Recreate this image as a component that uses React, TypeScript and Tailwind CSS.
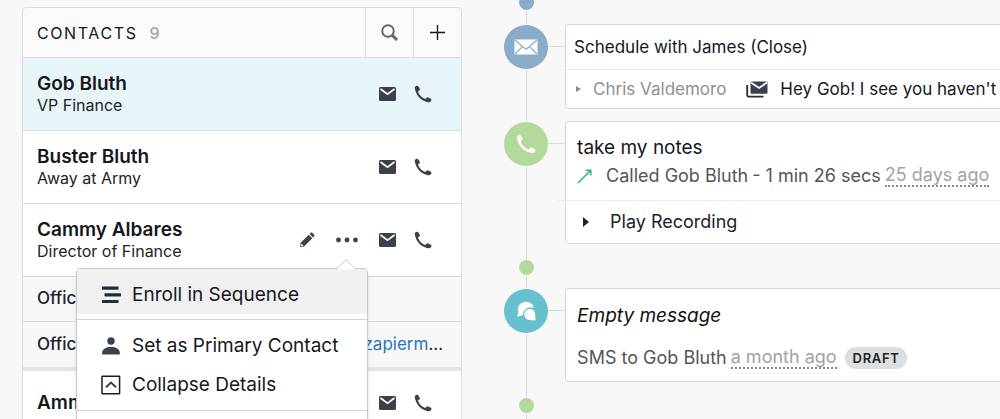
import type { ReactNode } from 'react';

const MailIcon = () => (
  <svg width="17" height="14" viewBox="0 0 17 14" fill="none">
    <rect width="17" height="14" rx="1.5" fill="#3b404c" />
    <path d="M1.5 2L8.5 7.2L15.5 2" stroke="#fff" strokeWidth="1.7" />
  </svg>
);

const PhoneIcon = ({ size = 18 }: { size?: number }) => (
  <svg width={size} height={size} viewBox="0 0 18 18" fill="currentColor">
    <path d="M.8 3.2C.6 2.4 1 1.8 2 1.1C2.9.4 3.7.5 4.2 1.3L5.8 3.7C6.2 4.5 5.9 5 5.1 5.6C4.3 6.2 3.9 6.6 4.3 7.4C5.5 10.1 7.9 12.6 10.7 13.8C11.5 14.1 11.8 13.8 12.3 13.1C12.9 12.3 13.5 12 14.3 12.4L16.9 13.8C17.6 14.3 17.7 15.1 17.1 15.9C16.3 16.9 15.4 17.4 14 17.2C7.2 16.1 1.8 10.3.8 3.2Z" />
  </svg>
);

const PencilIcon = () => (
  <svg width="16" height="16" viewBox="0 0 16 16">
    <path d="M1 15L1.6 10.7L9.8 2.7L13.3 6.2L5.1 14.4Z" fill="#3b404c" />
    <path d="M1.8 14.2L2.3 11.5L4.5 13.7Z" fill="#fff" />
    <path d="M10.6 1.9L11.8.8C12.3.3 12.8.3 13.3.8L15.2 2.7C15.6 3.2 15.6 3.7 15.2 4.2L14.1 5.4Z" fill="#3b404c" />
  </svg>
);

const DotsIcon = () => (
  <svg width="22" height="6" viewBox="0 0 22 6" fill="#3b404c">
    <circle cx="2.5" cy="3" r="2.4" />
    <circle cx="11" cy="3" r="2.4" />
    <circle cx="19.5" cy="3" r="2.4" />
  </svg>
);

const SearchIcon = () => (
  <svg width="17" height="17" viewBox="0 0 17 17" fill="none" stroke="#666">
    <circle cx="7" cy="7" r="5.8" strokeWidth="2" />
    <path d="M11.3 11.3L16 16" strokeWidth="3" />
  </svg>
);

const PlusIcon = () => (
  <svg width="15" height="15" viewBox="0 0 15 15" stroke="#1b1d22" strokeWidth="1.4">
    <path d="M7.5 0V15M0 7.5H15" />
  </svg>
);

const SequenceIcon = () => (
  <svg width="20" height="18" viewBox="0 0 20 18" fill="#262b3c">
    <rect x="1" y="0.5" width="16.5" height="3.2" rx="0.6" />
    <rect x="3.5" y="7.2" width="16.5" height="3.2" rx="0.6" />
    <rect x="1" y="13.9" width="16.5" height="3.2" rx="0.6" />
  </svg>
);

const PersonIcon = () => (
  <svg width="20" height="18" viewBox="0 0 20 18" fill="#3b404c">
    <circle cx="10" cy="4" r="3.7" />
    <path d="M1.2 17.6V15.6C1.2 12 5.2 10 10 10S18.8 12 18.8 15.6V17.6Z" />
  </svg>
);

const CollapseIcon = () => (
  <svg width="20" height="20" viewBox="0 0 20 20" fill="none" stroke="#1b1d22">
    <rect x="1" y="1.2" width="17.6" height="17.6" rx="0.6" strokeWidth="1.5" />
    <path d="M5 12.2L10 7.5L15 12.2" strokeWidth="2" stroke="#3b404c" />
  </svg>
);

const EnvelopeIcon = () => (
  <svg width="24" height="16" viewBox="0 0 24 16" fill="none">
    <rect x="0.5" y="0.5" width="23" height="15" fill="#fff" />
    <path d="M1 1L12 10.5L23 1M1 15L8.5 7.6M23 15L15.5 7.6" stroke="#8aacc8" strokeWidth="1.3" />
  </svg>
);

const MailStackIcon = () => (
  <svg width="22" height="17" viewBox="0 0 22 17" fill="none">
    <rect x="4.5" y="0.5" width="17" height="12.3" rx="1" fill="#3b404c" />
    <path d="M5 1.5L13 7L21 1.5" stroke="#fff" strokeWidth="1.8" />
    <path d="M1.2 4V14.2C1.2 15.2 1.6 15.7 2.6 15.7H17.5" stroke="#262b3c" strokeWidth="1.8" />
  </svg>
);

const ChatIcon = () => (
  <svg width="21" height="20" viewBox="0 0 22 20" fill="#fff">
    <path d="M.8 15.2C2.2 13.8 2.7 12.6 2.4 11C2 9.8 1.9 8.9 2 8C2.4 3.5 6 .4 10.3.4C14.5.4 18 3 18.8 6.8C13.5 4.6 7.8 8.4 7.2 14.2C5.5 15.4 3 15.6.8 15.2Z" />
    <path d="M21.4 19.6C18.8 19.9 16.5 19.8 14.2 19.5C11 19.1 8.7 16.8 8.7 13.6C8.7 10.2 11.4 7.8 14.5 7.8C17.9 7.8 20.2 10.4 20.1 13.6C20 15.8 19.8 17.9 21.4 19.6Z" />
  </svg>
);

const OutgoingIcon = () => (
  <svg width="15" height="15" viewBox="0 0 15 15" fill="none" stroke="#35b387" strokeWidth="1.5" className="shrink-0">
    <path d="M1 14L13.6 1.4M8.6 1.2H13.8V6.4" />
  </svg>
);

const Triangle = ({ className }: { className: string }) => (
  <svg viewBox="0 0 6 10" preserveAspectRatio="none" fill="currentColor" className={className}>
    <path d="M0 0L6 5L0 10Z" />
  </svg>
);

interface ContactRowProps {
  name: string;
  title?: string;
  active?: boolean;
  actions?: ReactNode;
  children?: ReactNode;
}

const ContactRow = ({ name, title, active, actions, children }: ContactRowProps) => (
  <div
    className={`relative flex items-center justify-between border-b border-[#dcdcdc] pl-[14px] pr-[29px] ${
      title ? 'h-[73px]' : 'h-16'
    } ${active ? 'bg-[#e8f5f8]' : 'bg-white'}`}
  >
    <div>
      <div className="text-[19px] leading-[22px] font-semibold text-[#15171c]">{name}</div>
      {title && <div className="text-base leading-5 text-[#202328]">{title}</div>}
    </div>
    <div className="flex items-center text-[#3b404c]">
      {actions}
      <button aria-label={`Email ${name}`}><MailIcon /></button>
      <button aria-label={`Call ${name}`} className="ml-[18px]"><PhoneIcon /></button>
    </div>
    {children}
  </div>
);

const MenuItem = ({ icon, label, active }: { icon: ReactNode; label: string; active?: boolean }) => (
  <button
    role="menuitem"
    className={`flex w-full items-center gap-[11px] pl-6 text-left text-[19px] leading-[39px] text-[#15171c] ${
      active ? 'bg-[#f0f0f1] pt-[6px]' : ''
    }`}
  >
    {icon}
    {label}
  </button>
);

const ContactMenu = () => (
  <div role="menu" className="absolute top-16 left-[53px] z-10 w-[292px] rounded-t border border-[#c9c9c9] bg-white shadow-md">
    {/* Pointer */}
    <svg width="22" height="11" viewBox="0 0 22 11" className="absolute -top-[10px] right-[10px]">
      <path d="M1 10.5L11 .7L21 10.5" fill="#fff" stroke="#c9c9c9" />
    </svg>
    <MenuItem icon={<SequenceIcon />} label="Enroll in Sequence" active />
    <div className="mt-[5px] border-t border-[#d4d4d4] py-[6px]">
      <MenuItem icon={<PersonIcon />} label="Set as Primary Contact" />
      <MenuItem icon={<CollapseIcon />} label="Collapse Details" />
    </div>
    <div className="h-12 border-t border-[#d4d4d4]" />
  </div>
);

const Contacts = () => (
  <section className="w-[45%] shrink-0 self-start rounded-t border border-[#dcdcdc] bg-[#fafafa]">
    <header className="flex h-[50px] items-stretch border-b border-[#dcdcdc]">
      <h2 className="flex flex-1 items-center gap-3 pl-[14px] text-base text-[#15171c]">
        <span className="tracking-widest">CONTACTS</span>
        <span className="font-medium text-[#a3a3a3]">9</span>
      </h2>
      <button aria-label="Search contacts" className="flex w-12 items-center justify-center border-l border-[#dcdcdc]">
        <SearchIcon />
      </button>
      <button aria-label="Add contact" className="flex w-12 items-center justify-center border-l border-[#dcdcdc]">
        <PlusIcon />
      </button>
    </header>

    <ContactRow name="Gob Bluth" title="VP Finance" active />
    <ContactRow name="Buster Bluth" title="Away at Army" />
    <ContactRow
      name="Cammy Albares"
      title="Director of Finance"
      actions={
        <>
          <button aria-label="Edit contact" className="mr-[21px]"><PencilIcon /></button>
          <button aria-label="More actions" className="mr-[21px]"><DotsIcon /></button>
        </>
      }
    >
      <ContactMenu />
    </ContactRow>

    {/* Contact details */}
    <div className="flex h-[45px] items-center border-b border-[#dcdcdc] bg-[#f8f8f8] pl-[14px] text-[17px] font-medium text-[#202328]">
      Office
    </div>
    <div className="flex h-[49px] items-center justify-between border-b-4 border-[#e4e4e4] bg-[#f8f8f8] pr-[18px] pl-[14px] text-[17px] text-[#202328]">
      <span className="font-medium">Office</span>
      <span><a href="#email" className="text-[#1f78b8]">zapierm</a>...</span>
    </div>

    <ContactRow name="Amm" />
  </section>
);

const Dot = ({ className }: { className: string }) => (
  <div className={`size-[15px] shrink-0 rounded-full ${className}`} />
);

interface EntryProps {
  icon: ReactNode;
  color: string;
  dot?: boolean;
  spacing: string;
  children: ReactNode;
}

const Entry = ({ icon, color, dot, spacing, children }: EntryProps) => (
  <article className="flex">
    <div className="flex w-11 shrink-0 flex-col items-center">
      <div className={`mt-px flex size-11 shrink-0 items-center justify-center rounded-full text-white ${color}`}>
        {icon}
      </div>
      <div className="mt-px w-px flex-1 bg-[#d9d9d9]" />
      {dot && (
        <>
          <Dot className="my-px bg-[#b5d99c]" />
          <div className="h-3 w-px bg-[#d9d9d9]" />
        </>
      )}
    </div>
    <div className="mt-[22px] h-px w-[17px] shrink-0 bg-[#d9d9d9]" />
    <div className={`min-w-0 flex-1 ${spacing}`}>
      <div className="rounded-l border-y border-l border-[#d9d9d9] bg-white whitespace-nowrap">{children}</div>
    </div>
  </article>
);

const Timeline = () => (
  <main className="-mt-2 min-w-0 flex-1 pl-[42px]">
    <div className="flex w-11 flex-col items-center">
      <Dot className="-mt-1 bg-[#8aacc8]" />
      <div className="mt-px h-[13px] w-px bg-[#d9d9d9]" />
    </div>

    <Entry icon={<EnvelopeIcon />} color="bg-[#8aacc8]" spacing="pb-3">
      <h3 className="border-b border-[#e4e4e4] pl-2 text-[17px] leading-[44px] text-[#15171c]">
        Schedule with James (Close)
      </h3>
      <div className="flex items-center pl-[10px] text-[17px] leading-[38px]">
        <Triangle className="mr-3 h-[6px] w-[5px] text-[#8a8a8a]" />
        <span className="mr-5 text-[#8f8f8f]">Chris Valdemoro</span>
        <MailStackIcon />
        <span className="ml-3 text-[#15171c]">Hey Gob! I see you haven't</span>
      </div>
    </Entry>

    <Entry icon={<PhoneIcon size={20} />} color="bg-[#b5d99c]" dot spacing="pb-11">
      <div className="pt-[11px] pb-[10px] pl-[11px]">
        <h3 className="text-[19px] leading-[29px] text-[#15171c]">take my notes</h3>
        <div className="flex items-center text-lg leading-7 text-[#555]">
          <OutgoingIcon />
          <span className="ml-[14px]">Called Gob Bluth</span>
          <span className="ml-1">- 1 min 26 secs</span>
          <time className="ml-1 border-b-2 border-dotted border-[#888] leading-5 text-[#a3a3a3]">25 days ago</time>
        </div>
      </div>
      <button className="-ml-2 flex w-[calc(100%+8px)] items-center border-t border-[#ececec] pl-[25px] text-left text-lg leading-[42px] text-[#202328]">
        <Triangle className="mr-[21px] h-[10px] w-[6px]" />
        Play Recording
      </button>
    </Entry>

    <Entry icon={<ChatIcon />} color="bg-[#68bfcd]" dot spacing="pb-11">
      <div className="pt-3 pb-[9px] pl-[11px]">
        <h3 className="text-[19px] leading-[30px] text-[#111] italic">Empty message</h3>
        <div className="mt-[13px] flex items-center text-lg leading-7 text-[#555]">
          SMS to Gob Bluth
          <time className="ml-1 border-b-2 border-dotted border-[#888] leading-5 text-[#a3a3a3]">a month ago</time>
          <span className="ml-2 rounded-full bg-[#dcdee0] px-2 text-[13px] leading-[22px] font-semibold tracking-wider text-[#202328]">
            DRAFT
          </span>
        </div>
      </div>
    </Entry>
  </main>
);

export default function App() {
  return (
    <div className="flex h-screen overflow-hidden bg-[#f8f8f8] pt-[7px] pl-[22px] font-[Inter,sans-serif]">
      <Contacts />
      <Timeline />
    </div>
  );
}
